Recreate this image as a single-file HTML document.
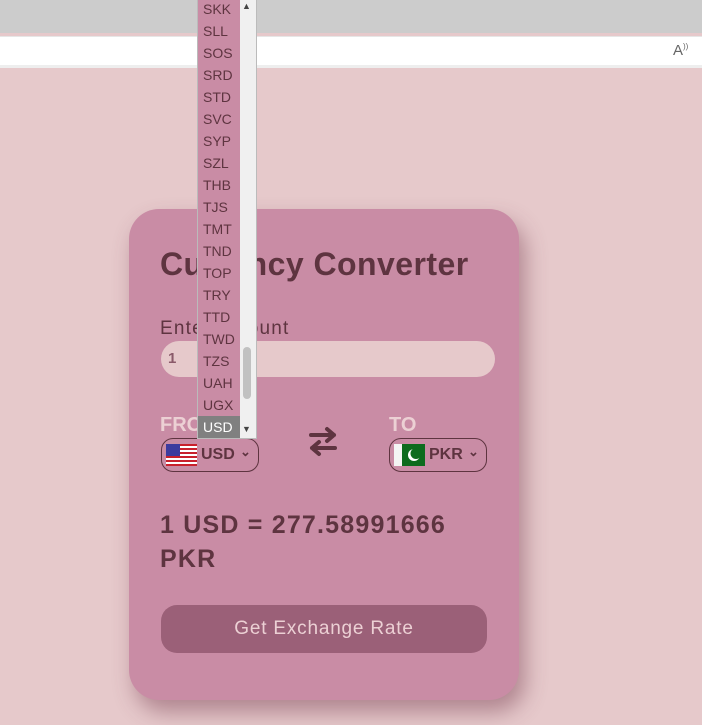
<!DOCTYPE html>
<html><head><meta charset="utf-8"><style>
*{margin:0;padding:0;box-sizing:border-box}
body{width:702px;height:725px;overflow:hidden;background:#e6c9cb;font-family:"Liberation Sans",sans-serif;position:relative}
.top{position:absolute;left:0;top:0;width:702px;height:33px;background:#cccccc}
.addr{position:absolute;left:0;top:36px;width:702px;height:32px;background:#fff;border-top:1px solid #e6e6e6;border-bottom:3px solid #eee}
.card{position:absolute;left:129px;top:209px;width:390px;height:491px;background:#c98ca5;border-radius:30px;box-shadow:6px 12px 22px rgba(110,50,70,.45)}
.abs{position:absolute}
h1{position:absolute;left:160px;top:246px;font-size:32px;color:#5e3440;font-weight:bold;letter-spacing:0.45px}
.lbl{left:160px;top:318px;font-size:19px;color:#5e3440;letter-spacing:1.2px}
.inp{left:161px;top:341px;width:334px;height:36px;background:#e6c9cb;border-radius:18px;color:#8a5a6a;font-size:15px;padding:9px 0 0 7px;font-weight:bold}
.ft{font-size:20px;font-weight:bold;color:#ecd0d4;top:414px}
.sel{top:438px;height:34px;border:1.5px solid #5e3440;border-radius:12px;font-size:16px;font-weight:bold;color:#5e3440}
.res{left:160px;top:508px;font-size:25px;font-weight:bold;color:#5e3440;line-height:34px;letter-spacing:1.2px}
.btn{left:161px;top:605px;width:326px;height:48px;background:#9b6078;border-radius:16px;color:#ecd0d4;font-size:19px;text-align:center;line-height:48px;letter-spacing:0.8px}
.dd{position:absolute;left:197px;top:0;width:60px;height:439px;background:#f0f0f0;border:1px solid #bbb;border-top:none}
.list{position:absolute;left:0;top:-2px;width:42px;background:#c98ca5}
.list div{height:22px;line-height:22px;font-size:14px;color:#5e3440;padding-left:5px}
.list .on{background:#808080;color:#fff}
</style></head><body>
<div class="top"></div><div class="addr"><span class="abs" style="left:673px;top:5px;font-size:15px;color:#666">A<sup style="font-size:8px">))</sup></span></div>
<div class="card"></div>
<h1>Currency Converter</h1>
<div class="abs lbl">Enter Amount</div>
<div class="abs inp">1</div>
<div class="abs ft" style="left:160px">FROM</div>
<div class="abs ft" style="left:389px">TO</div>
<div class="abs sel" style="left:161px;width:98px">
 <svg class="abs" style="left:4px;top:5px" width="31" height="22" viewBox="0 0 31 22"><rect width="31" height="22" fill="#fff"/><g fill="#c8202c"><rect y="0" width="31" height="2"/><rect y="4" width="31" height="2"/><rect y="8" width="31" height="2"/><rect y="12" width="31" height="2"/><rect y="16" width="31" height="2"/><rect y="20" width="31" height="2"/></g><rect width="14" height="12" fill="#3c3b9e"/></svg>
 <span class="abs" style="left:39px;top:7px">USD</span><span class="abs" style="left:78px;top:5px;font-size:13px">⌄</span></div>
<div class="abs sel" style="left:389px;width:98px">
 <svg class="abs" style="left:4px;top:5px" width="31" height="22" viewBox="0 0 31 22"><rect width="31" height="22" fill="#0d6b1e"/><rect width="8" height="22" fill="#f4f4f4"/><circle cx="20" cy="11" r="6" fill="#fff"/><circle cx="22" cy="9.5" r="5.5" fill="#0d6b1e"/></svg>
 <span class="abs" style="left:39px;top:7px">PKR</span><span class="abs" style="left:78px;top:5px;font-size:13px">⌄</span></div>
<svg class="abs" style="left:306px;top:424px" width="34" height="34" viewBox="0 0 34 34"><g stroke="#5e3440" stroke-width="4" fill="none" stroke-linecap="round" stroke-linejoin="round"><path d="M5 11H28M21 5l7 6-7 6"/><path d="M29 24H6M13 18l-7 6 7 6"/></g></svg>
<div class="abs res">1 USD = 277.58991666<br>PKR</div>
<div class="abs btn">Get Exchange Rate</div>
<div class="dd">
 <div class="list">
 <div>SKK</div><div>SLL</div><div>SOS</div><div>SRD</div><div>STD</div><div>SVC</div><div>SYP</div><div>SZL</div><div>THB</div><div>TJS</div><div>TMT</div><div>TND</div><div>TOP</div><div>TRY</div><div>TTD</div><div>TWD</div><div>TZS</div><div>UAH</div><div>UGX</div><div class="on">USD</div>
 </div>
 <div class="abs" style="left:45px;top:347px;width:8px;height:52px;background:#c1c1c1;border-radius:4px"></div>
 <div class="abs" style="left:44px;top:1px;font-size:9px;color:#444">▲</div>
 <div class="abs" style="left:44px;top:424px;font-size:9px;color:#444">▼</div>
</div>
</body></html>
